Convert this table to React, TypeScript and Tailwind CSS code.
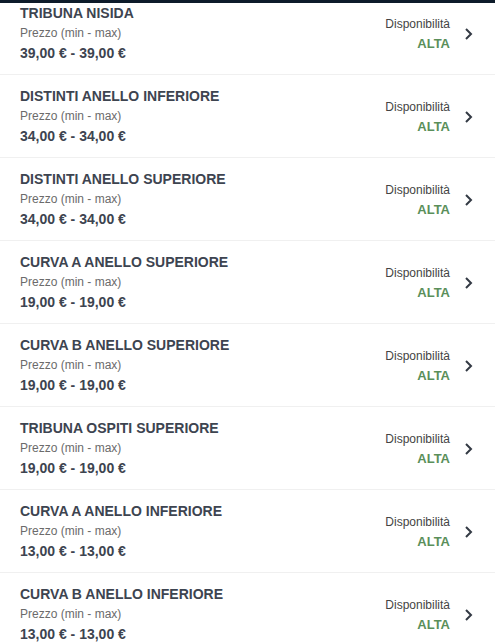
const sectors = [
  { name: "TRIBUNA NISIDA", price: "39,00 € - 39,00 €" },
  { name: "DISTINTI ANELLO INFERIORE", price: "34,00 € - 34,00 €" },
  { name: "DISTINTI ANELLO SUPERIORE", price: "34,00 € - 34,00 €" },
  { name: "CURVA A ANELLO SUPERIORE", price: "19,00 € - 19,00 €" },
  { name: "CURVA B ANELLO SUPERIORE", price: "19,00 € - 19,00 €" },
  { name: "TRIBUNA OSPITI SUPERIORE", price: "19,00 € - 19,00 €" },
  { name: "CURVA A ANELLO INFERIORE", price: "13,00 € - 13,00 €" },
  { name: "CURVA B ANELLO INFERIORE", price: "13,00 € - 13,00 €" },
];

const Chevron = () => (
  <svg width="10" height="14" viewBox="0 0 10 14" fill="none">
    <path d="M3 2l5 5-5 5" stroke="#333a44" strokeWidth="2" />
  </svg>
);

const SectorRow = ({ name, price }: { name: string; price: string }) => {
  return (
    <div className="flex items-center justify-between border-b border-[#f0f0f0] pl-[20px] pr-[22px] pt-[11px] pb-[11px] first:-mt-[11px]">
      {/* Name and price */}
      <div className="flex flex-col">
        <p className="text-[14px] leading-[20px] font-bold text-[#3d4450]">{name}</p>
        <p className="text-[12px] leading-[20px] text-[#6b6b6b]">Prezzo (min - max)</p>
        <p className="text-[14px] leading-[20px] font-bold text-[#3d4450]">{price}</p>
      </div>
      {/* Availability */}
      <div className="flex items-center gap-[13px] pt-[1px]">
        <div className="flex flex-col items-end">
          <p className="text-[12px] leading-[20px] text-[#444]">Disponibilità</p>
          <p className="text-[13px] leading-[20px] font-bold text-[#5a8f5a]">ALTA</p>
        </div>
        <Chevron />
      </div>
    </div>
  );
};

export default function App() {
  return (
    <div className="h-[644px] overflow-hidden bg-white font-['Liberation_Sans',Arial,sans-serif]">
      <div className="relative z-10 h-[3px] bg-[#0d1b2a]" />
      <div className="flex flex-col">
        {sectors.map((s) => (
          <SectorRow key={s.name} name={s.name} price={s.price} />
        ))}
      </div>
    </div>
  );
}
